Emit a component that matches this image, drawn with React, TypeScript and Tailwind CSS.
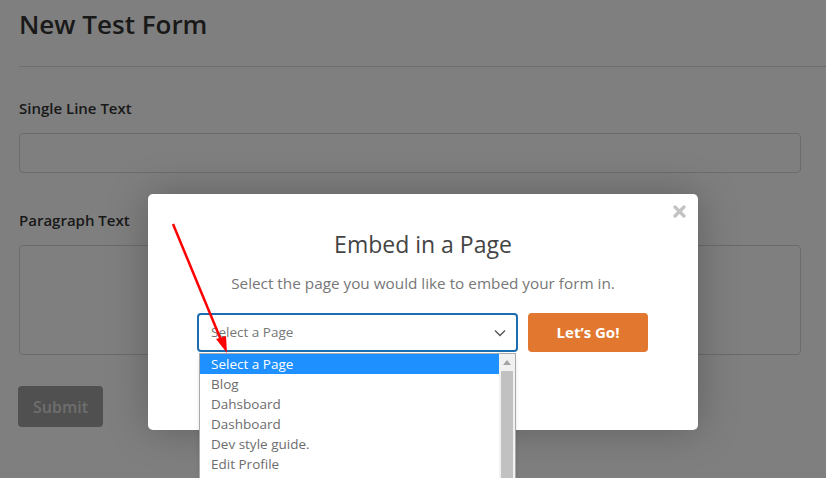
import React from "react";

const pages = ["Select a Page", "Blog", "Dahsboard", "Dashboard", "Dev style guide.", "Edit Profile"];

function FormPreview() {
  return (
    <div className="px-[19px] pt-[7px]">
      <h1 className="text-[26px] font-semibold leading-[34px] text-[#333]">New Test Form</h1>
      <div className="mt-[25px] h-px bg-[#ddd] -mr-[19px]" />
      <div className="mt-[31px] text-[15px] font-semibold leading-[20px] text-[#333]">Single Line Text</div>
      <div className="mt-[15px] h-[40px] w-[782px] rounded border border-[#d6d6d6] bg-white" />
      <div className="mt-[37px] text-[15px] font-semibold leading-[20px] text-[#333]">Paragraph Text</div>
      <div className="mt-[15px] h-[110px] w-[782px] rounded border border-[#d6d6d6] bg-white" />
      <button className="mt-[31px] -ml-px h-[41px] w-[85px] rounded bg-[#a0a0a0] text-[16px] font-semibold text-[#ddd]">
        Submit
      </button>
    </div>
  );
}

function PageDropdown() {
  return (
    <div className="absolute left-[51px] top-[159px] flex h-[130px] w-[317px] border border-[#aaa] bg-white shadow-md">
      <ul className="flex-1 text-[13.5px] leading-[20px] text-[#6d6d6d]">
        {pages.map((p, i) => (
          <li key={p} className={i === 0 ? "bg-[#1e90ff] px-[11px] text-white" : "px-[11px]"}>
            {p}
          </li>
        ))}
      </ul>
      <div className="flex w-[16px] flex-col bg-[#f1f1f1]">
        <div className="flex h-[17px] items-center justify-center">
          <svg width="8" height="5" viewBox="0 0 8 5">
            <path d="M0 5 L4 0 L8 5 Z" fill="#a3a3a3" />
          </svg>
        </div>
        <div className="mx-[2px] flex-1 bg-[#c1c1c1]" />
      </div>
    </div>
  );
}

function EmbedModal() {
  return (
    <div className="absolute left-[148px] top-[194px] h-[236px] w-[550px] rounded-[5px] bg-white shadow-[0_0_40px_rgba(0,0,0,0.25)]">
      <button className="absolute right-[12px] top-[11px] text-[#bbb]">
        <svg width="13" height="13" viewBox="0 0 13 13">
          <path d="M2 2 L11 11 M11 2 L2 11" stroke="#c3c3c3" strokeWidth="3.2" strokeLinecap="round" />
        </svg>
      </button>
      <div className="pt-[35px] text-center text-[23px] font-medium leading-[30px] text-[#444]">Embed in a Page</div>
      <div className="mt-[14px] text-center text-[15.3px] leading-[20px] text-[#777]">
        Select the page you would like to embed your form in.
      </div>
      <div className="mt-[20px] flex gap-[10px] pl-[49px]">
        <div className="flex h-[39px] w-[321px] items-center justify-between rounded-[4px] border-2 border-[#1b6db0] pl-[12px] pr-[10px] text-[13.5px] text-[#777]">
          <span>Select a Page</span>
          <svg width="12" height="8" viewBox="0 0 12 8">
            <path d="M1 1.5 L6 6.5 L11 1.5" fill="none" stroke="#555" strokeWidth="1.4" />
          </svg>
        </div>
        <button className="h-[39px] w-[120px] rounded-[4px] bg-[#e27730] text-[15px] font-bold text-white">
          Let’s Go!
        </button>
      </div>
      <PageDropdown />
    </div>
  );
}

export default function App() {
  return (
    <div className="relative h-[478px] w-[826px] overflow-hidden bg-white font-['Open_Sans',sans-serif]">
      <FormPreview />
      <div className="absolute inset-0 bg-black/50" />
      <EmbedModal />
      <svg className="pointer-events-none absolute left-0 top-0" width="826" height="478">
        <line x1="173" y1="224" x2="221" y2="340" stroke="#ff0000" strokeWidth="2.5" />
        <path d="M227 353 L216 339 L226 336 Z" fill="#ff0000" />
      </svg>
    </div>
  );
}
